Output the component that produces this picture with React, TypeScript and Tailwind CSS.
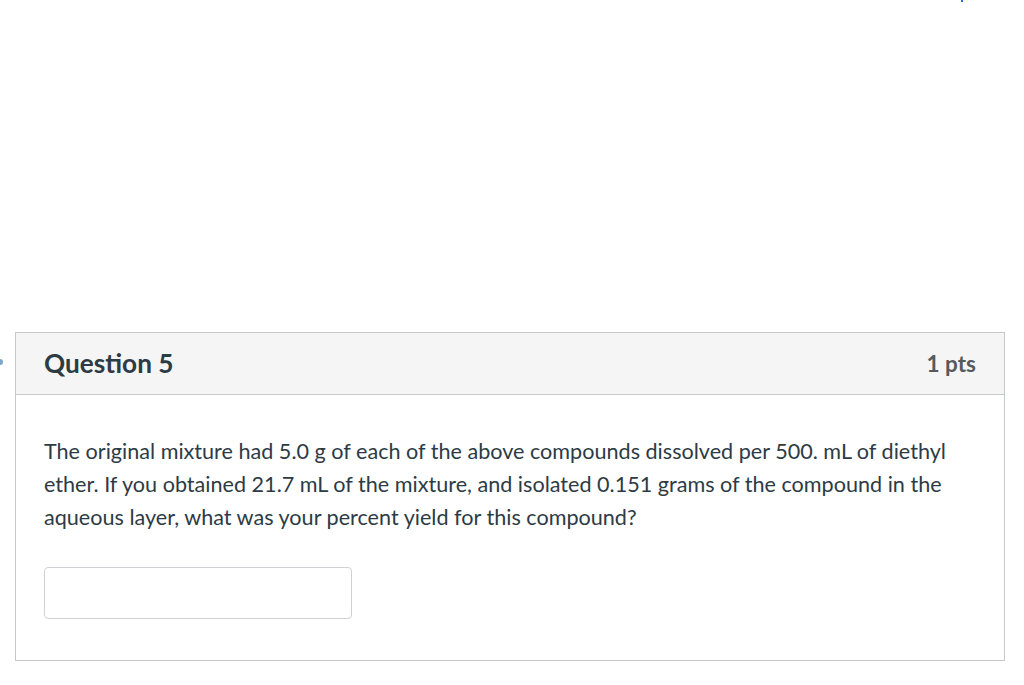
export default function App() {
  return (
    <div
      className="relative h-[685px] w-[1024px] overflow-hidden bg-white text-[#2d3b45]"
      style={{ fontFamily: "Lato, 'Noto Sans', sans-serif" }}
    >
      <div className="absolute left-[961px] top-0 h-[2px] w-[2px] bg-[#2b6ad8]" />
      <div className="absolute left-0 top-[359px] h-[6px] w-[3px] rounded-r-full bg-[#7ea6c9]" />
      <div className="pl-[15px] pr-[19px] pt-[332px]">
        <QuestionCard />
      </div>
    </div>
  );
}

function QuestionCard() {
  return (
    <div className="border border-[#c4c8cb]">
      <div className="flex h-[62px] items-center justify-between border-b border-[#c4c8cb] bg-[#f5f5f5] pl-[28px] pr-[28px]">
        <h2 className="text-[26.2px] font-bold text-[#2d3b45]">Question 5</h2>
        <div className="text-[22.5px] font-bold text-[#555a5e]">1 pts</div>
      </div>
      <div className="pb-[41px] pl-[28px] pr-[40px] pt-[40px]">
        <p className="text-[21.6px] leading-[33px] text-[#2d3b45]">
          The original mixture had 5.0 g of each of the above compounds dissolved per 500. mL of diethyl
          ether. If you obtained 21.7 mL of the mixture, and isolated 0.151 grams of the compound in the
          aqueous layer, what was your percent yield for this compound?
        </p>
        <input
          type="text"
          className="mt-[33px] block h-[52px] w-[308px] rounded-[4px] border border-[#cfd2d4] bg-white"
        />
      </div>
    </div>
  );
}
